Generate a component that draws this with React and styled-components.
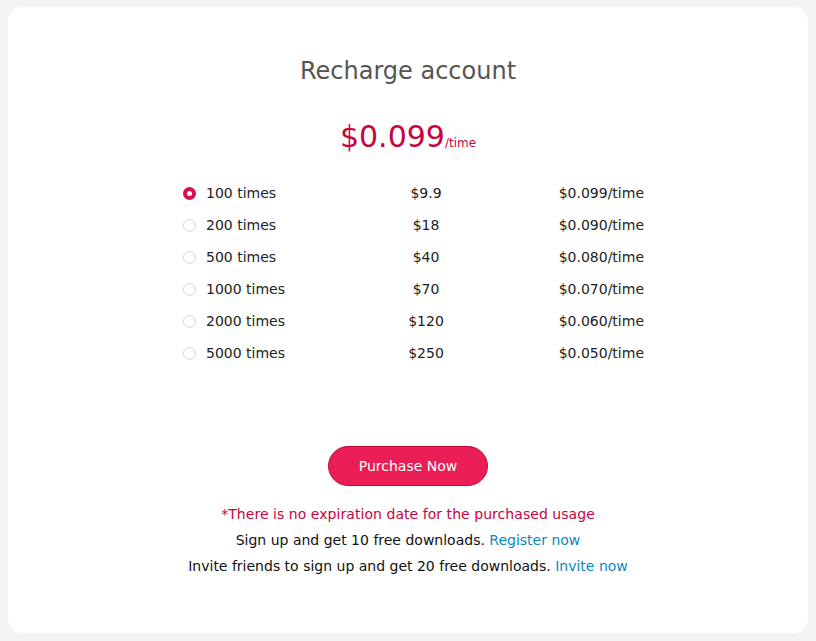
import React, { useState } from "react";
import styled, { createGlobalStyle } from "styled-components";

const GlobalStyle = createGlobalStyle`
	html, body {
		margin: 0;
		background: #f3f3f5;
	}
	body {
		padding: 7px 8px 8px 8px;
		font-family: "DejaVu Sans", "Liberation Sans", sans-serif;
	}
`;

const Card = styled.div`
	background: #fff;
	border-radius: 14px;
	height: 626px;
	box-sizing: border-box;
	padding-top: 48px;
	display: flex;
	flex-direction: column;
	align-items: center;
`;

const Title = styled.h1`
	margin: 0;
	font-size: 24px;
	font-weight: normal;
	color: #555;
	line-height: 32px;
`;

const Price = styled.div`
	margin-top: 30px;
	color: #c6043f;
	font-size: 30px;
	line-height: 40px;
	span {
		font-size: 12px;
	}
`;

const Table = styled.div`
	margin-top: 14px;
	width: 461px;
	padding-left: 11px;
	display: grid;
	grid-template-columns: 183px 120px 1fr;
	grid-auto-rows: 32px;
	align-items: center;
	font-size: 14px;
	color: #222;
`;

const Label = styled.label`
	display: flex;
	align-items: center;
	gap: 10px;
	cursor: pointer;
`;

const Radio = styled.span`
	width: 13px;
	height: 13px;
	box-sizing: border-box;
	border-radius: 50%;
	border: ${(p) => (p.$on ? "4px solid #d6104a" : "1px solid #d4d4d4")};
	background: #fff;
`;

const Cell = styled.div`
	text-align: ${(p) => p.$align || "left"};
`;

const Button = styled.button`
	margin-top: 77px;
	width: 160px;
	height: 40px;
	border-radius: 20px;
	border: 1px solid #c20a3e;
	background: #e91e55;
	color: #fff;
	font-family: inherit;
	font-size: 14px;
	cursor: pointer;
`;

const Notes = styled.div`
	margin-top: 15px;
	text-align: center;
	font-size: 14px;
	line-height: 26px;
	color: #111;
`;

const Warn = styled.div`
	color: #c6043f;
	letter-spacing: 0.05px;
`;

const A = styled.a`
	color: #0b87c0;
	text-decoration: none;
`;

const plans = [
	["100 times", "$9.9", "$0.099/time"],
	["200 times", "$18", "$0.090/time"],
	["500 times", "$40", "$0.080/time"],
	["1000 times", "$70", "$0.070/time"],
	["2000 times", "$120", "$0.060/time"],
	["5000 times", "$250", "$0.050/time"],
];

export default function App() {
	const [sel, setSel] = useState(0);
	const unit = plans[sel][2].replace("/time", "");
	return (
		<>
			<GlobalStyle />
			<Card>
				<Title>Recharge account</Title>
				<Price>
					{unit}
					<span>/time</span>
				</Price>
				<Table>
					{plans.map(([n, p, u], i) => (
						<React.Fragment key={n}>
							<Label onClick={() => setSel(i)}>
								<Radio $on={sel === i} />
								{n}
							</Label>
							<Cell $align="center">{p}</Cell>
							<Cell $align="right">{u}</Cell>
						</React.Fragment>
					))}
				</Table>
				<Button>Purchase Now</Button>
				<Notes>
					<Warn>*There is no expiration date for the purchased usage</Warn>
					<div>
						Sign up and get 10 free downloads. <A href="#">Register now</A>
					</div>
					<div>
						Invite friends to sign up and get 20 free downloads. <A href="#">Invite now</A>
					</div>
				</Notes>
			</Card>
		</>
	);
}
